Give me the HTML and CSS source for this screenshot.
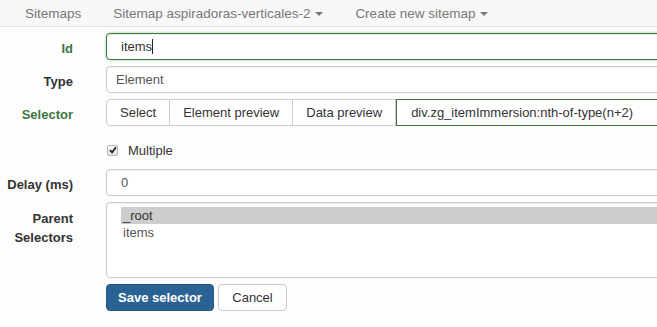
FILE: index.html
```html
<!DOCTYPE html>
<html>
<head>
<meta charset="utf-8">
<link rel="stylesheet" href="styles.css">
</head>
<body>
<nav class="navbar">
  <ul class="nav">
    <li class="nav-item">Sitemaps</li>
    <li class="nav-item">Sitemap aspiradoras-verticales-2 <span class="caret"></span></li>
    <li class="nav-item">Create new sitemap <span class="caret"></span></li>
  </ul>
</nav>
<form class="form">
  <div class="row">
    <label class="label success">Id</label>
    <div class="field"><div class="input input-success">items<span class="cursor"></span></div></div>
  </div>
  <div class="row">
    <label class="label">Type</label>
    <div class="field"><div class="input input-select">Element</div></div>
  </div>
  <div class="row">
    <label class="label success">Selector</label>
    <div class="field group">
      <span class="gbtn gbtn-first">Select</span>
      <span class="gbtn">Element preview</span>
      <span class="gbtn">Data preview</span>
      <div class="ginput">div.zg_itemImmersion:nth-of-type(n+2)</div>
    </div>
  </div>
  <div class="row row-check">
    <span class="label"></span>
    <div class="field check">
      <span class="checkbox"><svg width="8" height="8" viewBox="0 0 8 8"><path d="M1 4.2 L3.1 6.4 L7 1.2" fill="none" stroke="#222" stroke-width="1.8"/></svg></span>
      <span class="check-text">Multiple</span>
    </div>
  </div>
  <div class="row">
    <label class="label">Delay (ms)</label>
    <div class="field"><div class="input">0</div></div>
  </div>
  <div class="row">
    <label class="label label-multi">Parent<br>Selectors</label>
    <div class="field"><div class="listbox">
      <div class="option selected">_root</div>
      <div class="option">items</div>
    </div></div>
  </div>
  <div class="row">
    <span class="label"></span>
    <div class="field buttons">
      <span class="btn btn-primary">Save selector</span>
      <span class="btn btn-default">Cancel</span>
    </div>
  </div>
</form>
</body>
</html>
```

FILE: styles.css
```css
html, body {
  margin: 0;
  padding: 0;
  background: #fdfdfd;
  overflow: hidden;
  font-family: "Liberation Sans", Arial, sans-serif;
  font-size: 13px;
  color: #333;
}
.navbar {
  height: 26px;
  background: #f8f8f8;
  border-bottom: 1px solid #e3e3e3;
}
.nav {
  list-style: none;
  margin: 0;
  padding: 0 0 0 9px;
  display: flex;
  height: 26px;
  align-items: center;
  font-size: 13.5px;
}
.nav-item {
  padding: 0 16px;
  color: #777;
  white-space: nowrap;
}
.caret {
  display: inline-block;
  width: 0;
  height: 0;
  border-top: 4px solid #777;
  border-left: 4px solid transparent;
  border-right: 4px solid transparent;
  vertical-align: middle;
  margin-left: 1px;
}
.form {
  padding-top: 6px;
}
.row {
  display: flex;
  align-items: flex-start;
  margin-bottom: 6px;
}
.label {
  width: 73px;
  flex: none;
  margin-right: 33px;
  text-align: right;
  font-weight: bold;
  color: #333;
  padding-top: 8px;
  line-height: 16px;
}
.label.success {
  color: #3c763d;
}
.label-multi {
  line-height: 19px;
  padding-top: 7px;
}
.field {
  width: 580px;
  flex: none;
}
.input {
  box-sizing: border-box;
  height: 27px;
  border: 1px solid #ccc;
  border-radius: 4px;
  background: #fff;
  padding: 0 14px;
  line-height: 25px;
  color: #555;
  box-shadow: inset 0 1px 1px rgba(0,0,0,0.06);
}
.input-select {
  padding-left: 9px;
}
.input-success {
  border-color: #3c763d;
  box-shadow: inset 0 1px 1px rgba(0,0,0,0.075), 0 0 3px #9ccc9c;
  color: #333;
}
.cursor {
  display: inline-block;
  width: 1px;
  height: 15px;
  background: #222;
  vertical-align: -3px;
}
.group {
  display: flex;
  height: 27px;
}
.gbtn {
  box-sizing: border-box;
  height: 27px;
  line-height: 25px;
  border: 1px solid #ccc;
  border-left: none;
  background: #fff;
  padding: 0 13px;
  white-space: nowrap;
  color: #333;
}
.gbtn-first {
  border-left: 1px solid #ccc;
  border-radius: 4px 0 0 4px;
}
.ginput {
  box-sizing: border-box;
  flex: 1;
  height: 27px;
  line-height: 25px;
  border: 1px solid #3c763d;
  background: #fff;
  padding: 0 14px;
  white-space: nowrap;
  color: #333;
}
.row-check {
  height: 31px;
  align-items: center;
}
.check {
  display: flex;
  align-items: center;
  padding-top: 5px;
}
.checkbox {
  box-sizing: border-box;
  width: 11px;
  height: 11px;
  margin-left: 1px;
  border: 1px solid #b5b5b5;
  border-radius: 2px;
  background: linear-gradient(#fafafa, #e2e2e2);
  display: flex;
  align-items: center;
  justify-content: center;
}
.check-text {
  margin-left: 10px;
  color: #333;
}
.listbox {
  box-sizing: border-box;
  height: 76px;
  border: 1px solid #ccc;
  border-radius: 4px;
  background: #fff;
  padding: 4px 0 0 14px;
  box-shadow: inset 0 1px 1px rgba(0,0,0,0.06);
}
.option {
  height: 17px;
  line-height: 17px;
  padding-left: 2px;
  color: #555;
}
.option.selected {
  background: #cdcdcd;
  color: #333;
}
.buttons {
  display: flex;
  gap: 4px;
}
.btn {
  box-sizing: border-box;
  height: 27px;
  line-height: 25px;
  border-radius: 4px;
  border: 1px solid transparent;
  white-space: nowrap;
  text-align: center;
}
.btn-primary {
  background: #2b6294;
  border-color: #255783;
  color: #fff;
  font-weight: bold;
  width: 108px;
}
.btn-default {
  background: #fff;
  border-color: #ccc;
  color: #333;
  width: 69px;
}
```
